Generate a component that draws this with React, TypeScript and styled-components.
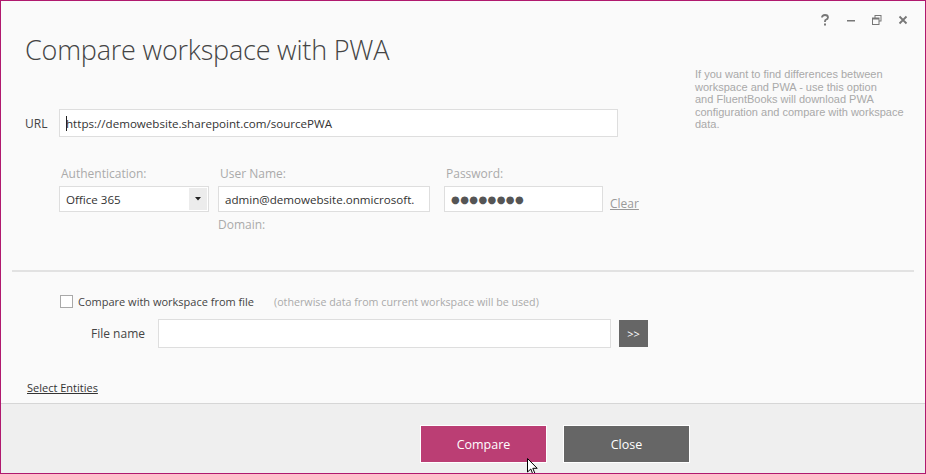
import { FC } from "react"
import styled, { createGlobalStyle } from "styled-components"

const GlobalStyle = createGlobalStyle`
  html, body {
    margin: 0;
    padding: 0;
    background: #fafafa;
  }
  * {
    box-sizing: border-box;
  }
`

const uiFont = `"Open Sans", "Noto Sans", sans-serif`

const Window = styled.div`
  position: relative;
  width: 926px;
  height: 474px;
  display: flex;
  flex-direction: column;
  border: 1px solid #b0196e;
  font-family: ${uiFont};
  color: #444;
  overflow: hidden;
`

const Body = styled.div`
  flex: 1;
  display: flex;
  flex-direction: column;
  background: #fafafa;
`

const Controls = styled.div`
  display: flex;
  justify-content: flex-end;
  align-items: center;
  height: 24px;
  margin-top: 7px;
  padding-right: 9px;
`

const ControlButton = styled.span`
  width: 26px;
  height: 24px;
  display: flex;
  align-items: center;
  justify-content: center;
  color: #777;
`

const Top = styled.div`
  display: flex;
  justify-content: space-between;
`

const Main = styled.div`
  width: 660px;
  padding-left: 24px;
`

const Title = styled.h1`
  margin: 0;
  font-weight: 300;
  font-size: 27px;
  line-height: 36px;
  color: #444;
  letter-spacing: -0.2px;
`

const Aside = styled.div`
  width: 230px;
  margin-top: 36px;
  font-family: "Liberation Sans", Arial, sans-serif;
  font-size: 11px;
  line-height: 12.6px;
  color: #a9a9a9;
`

const UrlRow = styled.div`
  display: flex;
  align-items: center;
  margin-top: 41px;
`

const RowLabel = styled.span<{ width: number }>`
  width: ${({ width }) => width}px;
  font-size: 12px;
  color: #444;
`

const TextBox = styled.div<{ width: number; height?: number }>`
  width: ${({ width }) => width}px;
  height: ${({ height }) => height ?? 26}px;
  border: 1px solid #dedede;
  background: #fff;
  display: flex;
  align-items: center;
  padding: 0 6px;
  font-size: 11.6px;
  color: #333;
  white-space: nowrap;
  overflow: hidden;
`

const Caret = styled.span`
  display: inline-block;
  width: 1px;
  height: 15px;
  background: #222;
  margin-right: -1px;
`

const Credentials = styled.div`
  display: flex;
  gap: 10px;
  margin-top: 28px;
  padding-left: 34px;
`

const Field = styled.div<{ offset?: number }>`
  display: flex;
  flex-direction: column;
  margin-left: ${({ offset }) => offset ?? 0}px;
`

const FieldLabel = styled.span`
  font-size: 12px;
  line-height: 18px;
  color: #aaa;
  margin-bottom: 3px;
  padding-left: 2px;
`

const SubLabel = styled(FieldLabel)`
  margin-top: 4px;
  padding-left: 0;
`

const SelectBox = styled.div`
  width: 150px;
  height: 26px;
  border: 1px solid #dedede;
  background: #fff;
  display: flex;
  align-items: stretch;
  font-size: 11.6px;
  color: #333;
`

const SelectValue = styled.span`
  flex: 1;
  display: flex;
  align-items: center;
  padding-left: 6px;
`

const SelectArrow = styled.span`
  width: 18px;
  background: #ececec;
  display: flex;
  align-items: center;
  justify-content: center;
  margin: 1px;
`

const PasswordRow = styled.div`
  display: flex;
  align-items: flex-end;
  gap: 7px;
`

const Bullets = styled.span`
  font-family: "DejaVu Sans", sans-serif;
  font-size: 10px;
  letter-spacing: 0.4px;
  color: #555;
`

const LinkText = styled.a<{ muted?: boolean }>`
  font-size: ${({ muted }) => (muted ? 12 : 11)}px;
  color: ${({ muted }) => (muted ? "#999" : "#333")};
  text-decoration: underline;
  cursor: pointer;
`

const Separator = styled.div`
  height: 2px;
  background: #e2e2e2;
  margin: 33px 11px 0 11px;
`

const Lower = styled.div`
  padding-left: 26px;
`

const CheckRow = styled.div`
  display: flex;
  align-items: center;
  margin-top: 22px;
  padding-left: 33px;
  font-size: 11px;
  color: #444;
`

const CheckBox = styled.span`
  width: 13px;
  height: 13px;
  border: 1px solid #a9a9a9;
  background: #fff;
  margin-right: 5px;
`

const Hint = styled.span`
  margin-left: 20px;
  font-size: 10.7px;
  color: #aaa;
`

const FileRow = styled.div`
  display: flex;
  align-items: center;
  margin-top: 10px;
  padding-left: 64px;
`

const BrowseButton = styled.span`
  width: 29px;
  height: 27px;
  margin-left: 8px;
  background: #666;
  color: #fff;
  font-size: 11px;
  display: flex;
  align-items: center;
  justify-content: center;
`

const EntitiesRow = styled.div`
  margin-top: 27px;
`

const Footer = styled.div`
  height: 70px;
  background: #efefef;
  border-top: 1px solid #d6d6d6;
  display: flex;
  align-items: flex-start;
  gap: 16px;
  padding-top: 21px;
  padding-left: 419px;
`

const DialogButton = styled.span<{ primary?: boolean }>`
  width: 127px;
  height: 38px;
  border: 1px solid #fff;
  background: ${({ primary }) => (primary ? "#bb3e74" : "#666")};
  color: #fff;
  font-size: 12.5px;
  display: flex;
  align-items: center;
  justify-content: center;
`

const Pointer = styled.svg`
  position: absolute;
  left: 526px;
  top: 457px;
`

const App: FC = () => {
  return (
    <Window>
      <GlobalStyle />
      <Body>
        <Controls>
          <ControlButton>
            <svg width="10" height="12" viewBox="0 0 10 12">
              <path d="M2 3.5 Q2 1 5 1 Q8 1 8 3.5 Q8 5 5.5 6 L5 7.2 L5 8" fill="none" stroke="#777" strokeWidth="1.8" />
              <rect x="4" y="9.5" width="2" height="2" fill="#777" />
            </svg>
          </ControlButton>
          <ControlButton>
            <svg width="10" height="10" viewBox="0 0 10 10">
              <rect x="1" y="5" width="8" height="1.5" fill="#777" />
            </svg>
          </ControlButton>
          <ControlButton>
            <svg width="10" height="10" viewBox="0 0 10 10">
              <rect x="3" y="0.5" width="6" height="5.5" fill="none" stroke="#777" strokeWidth="1" />
              <rect x="0.5" y="3" width="6.5" height="6.5" fill="#fafafa" stroke="#777" strokeWidth="1" />
              <rect x="0.5" y="3" width="6.5" height="1.5" fill="#777" />
            </svg>
          </ControlButton>
          <ControlButton>
            <svg width="10" height="10" viewBox="0 0 10 10">
              <path d="M1.5 1.5 L8.5 8.5 M8.5 1.5 L1.5 8.5" stroke="#777" strokeWidth="1.8" />
            </svg>
          </ControlButton>
        </Controls>

        <Top>
          <Main>
            <Title>Compare workspace with PWA</Title>
            <UrlRow>
              <RowLabel width={34}>URL</RowLabel>
              <TextBox width={559} height={28}>
                <Caret />
                https://demowebsite.sharepoint.com/sourcePWA
              </TextBox>
            </UrlRow>
            <Credentials>
              <Field>
                <FieldLabel>Authentication:</FieldLabel>
                <SelectBox>
                  <SelectValue>Office 365</SelectValue>
                  <SelectArrow>
                    <svg width="6" height="4" viewBox="0 0 6 4">
                      <path d="M0 0 H6 L3 3.5 Z" fill="#222" />
                    </svg>
                  </SelectArrow>
                </SelectBox>
              </Field>
              <Field offset={-1}>
                <FieldLabel>User Name:</FieldLabel>
                <TextBox width={212}>admin@demowebsite.onmicrosoft.</TextBox>
                <SubLabel>Domain:</SubLabel>
              </Field>
              <Field offset={4}>
                <FieldLabel>Password:</FieldLabel>
                <PasswordRow>
                  <TextBox width={159}>
                    <Bullets>●●●●●●●●</Bullets>
                  </TextBox>
                  <LinkText muted>Clear</LinkText>
                </PasswordRow>
              </Field>
            </Credentials>
          </Main>
          <Aside>
            If you want to find differences between
            <br />
            workspace and PWA - use this option
            <br />
            and FluentBooks will download PWA
            <br />
            configuration and compare with workspace
            <br />
            data.
          </Aside>
        </Top>

        <Separator />

        <Lower>
          <CheckRow>
            <CheckBox />
            Compare with workspace from file
            <Hint>(otherwise data from current workspace will be used)</Hint>
          </CheckRow>
          <FileRow>
            <RowLabel width={67}>File name</RowLabel>
            <TextBox width={453} height={29} />
            <BrowseButton>&gt;&gt;</BrowseButton>
          </FileRow>
          <EntitiesRow>
            <LinkText>Select Entities</LinkText>
          </EntitiesRow>
        </Lower>
      </Body>

      <Footer>
        <DialogButton primary>Compare</DialogButton>
        <DialogButton>Close</DialogButton>
      </Footer>

      <Pointer width="12" height="18" viewBox="0 0 12 18">
        <path d="M0.5 0.5 L0.5 14 L3.8 11 L6 16.5 L8 15.6 L5.8 10.3 L10.2 10.3 Z" fill="#fff" stroke="#000" strokeWidth="1" />
      </Pointer>
    </Window>
  )
}

export default App
